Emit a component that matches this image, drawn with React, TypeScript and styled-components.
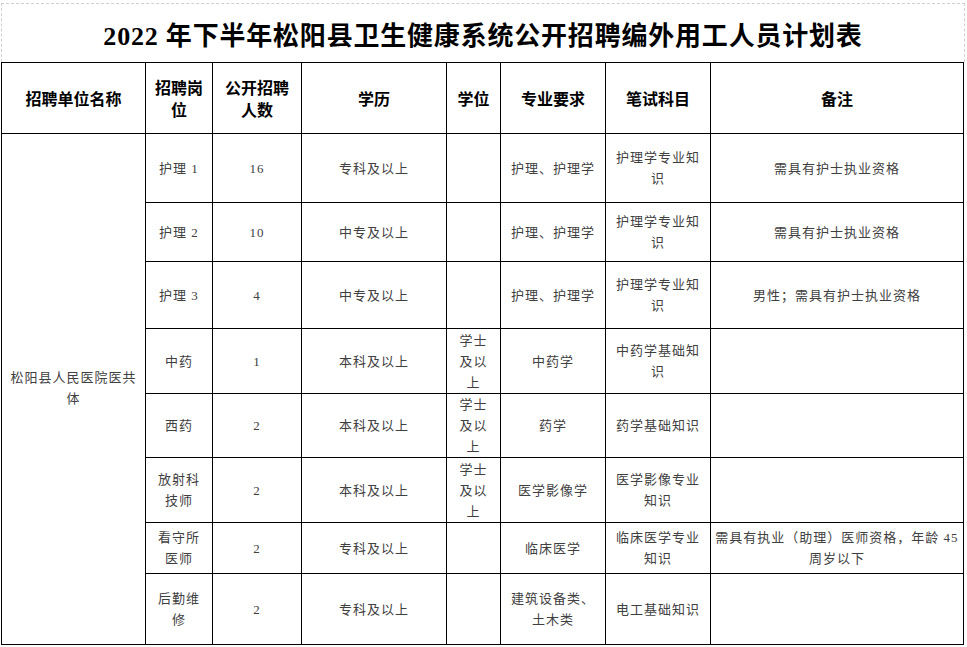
import React from 'react';
import styled, { createGlobalStyle } from 'styled-components';

const GlobalStyle = createGlobalStyle`
  html, body {
    margin: 0;
    padding: 0;
    background: #ffffff;
  }
`;

const SERIF_STACK = '"Liberation Serif", "Noto Sans CJK SC", serif';
const SANS_STACK = '"Noto Sans CJK SC", "Noto Sans", sans-serif';

interface PlanRow {
  post: string;
  count: string;
  education: string;
  degree: string;
  major: string;
  exam: string;
  note: string;
  height: number;
}

const COLUMN_WIDTHS = [144, 67, 89, 145, 54, 105, 105, 253];

const HEADERS = [
  '招聘单位名称',
  '招聘岗\n位',
  '公开招聘\n人数',
  '学历',
  '学位',
  '专业要求',
  '笔试科目',
  '备注'
];

const UNIT_NAME = '松阳县人民医院医共\n体';

const ROWS: PlanRow[] = [
  { post: '护理 1', count: '16', education: '专科及以上', degree: '', major: '护理、护理学', exam: '护理学专业知\n识', note: '需具有护士执业资格', height: 69 },
  { post: '护理 2', count: '10', education: '中专及以上', degree: '', major: '护理、护理学', exam: '护理学专业知\n识', note: '需具有护士执业资格', height: 59 },
  { post: '护理 3', count: '4', education: '中专及以上', degree: '', major: '护理、护理学', exam: '护理学专业知\n识', note: '男性；需具有护士执业资格', height: 67 },
  { post: '中药', count: '1', education: '本科及以上', degree: '学士\n及以\n上', major: '中药学', exam: '中药学基础知\n识', note: '', height: 65 },
  { post: '西药', count: '2', education: '本科及以上', degree: '学士\n及以\n上', major: '药学', exam: '药学基础知识', note: '', height: 64 },
  { post: '放射科\n技师', count: '2', education: '本科及以上', degree: '学士\n及以\n上', major: '医学影像学', exam: '医学影像专业\n知识', note: '', height: 65 },
  { post: '看守所\n医师', count: '2', education: '专科及以上', degree: '', major: '临床医学', exam: '临床医学专业\n知识', note: '需具有执业（助理）医师资格，年龄 45\n周岁以下', height: 51 },
  { post: '后勤维\n修', count: '2', education: '专科及以上', degree: '', major: '建筑设备类、\n土木类', exam: '电工基础知识', note: '', height: 71 }
];

const Page = styled.div`
  width: 967px;
  padding: 3px 0 0 1px;
  box-sizing: border-box;
`;

const TitleBox = styled.div`
  width: 964px;
  height: 59px;
  box-sizing: border-box;
  border: 1px dashed #cfcfcf;
  border-bottom: none;
  display: flex;
  align-items: center;
  justify-content: center;
  padding-top: 1px;
`;

const Title = styled.h1`
  margin: 0;
  font-family: ${SERIF_STACK};
  font-size: 26px;
  font-weight: 700;
  color: #000;
  white-space: nowrap;
  letter-spacing: 0.8px;
`;

const PlanTable = styled.table`
  border-collapse: collapse;
  table-layout: fixed;
  width: 963px;
  border: 1px solid #000;
`;

const Col = styled.col<{ $w: number }>`
  width: ${p => p.$w}px;
`;

const HeadRow = styled.tr`
  height: 71px;
`;

const HeadCell = styled.th`
  border: 1px solid #000;
  padding: 0 4px;
  font-family: ${SANS_STACK};
  font-size: 16px;
  font-weight: 700;
  line-height: 22px;
  color: #000;
  text-align: center;
  vertical-align: middle;
  white-space: pre-line;
`;

const BodyRow = styled.tr<{ $h: number }>`
  height: ${p => p.$h}px;
`;

const Cell = styled.td`
  border: 1px solid #000;
  padding: 0 4px;
  font-family: ${SERIF_STACK};
  font-size: 13px;
  font-weight: 400;
  letter-spacing: 1px;
  line-height: 21px;
  color: #404040;
  text-align: center;
  vertical-align: middle;
  white-space: pre-line;
`;

const UnitCell = styled(Cell)`
  padding-bottom: 2px;
`;

export default function App() {
  return (
    <Page>
      <GlobalStyle />
      <TitleBox>
        <Title>2022 年下半年松阳县卫生健康系统公开招聘编外用工人员计划表</Title>
      </TitleBox>
      <PlanTable>
        <colgroup>
          {COLUMN_WIDTHS.map((w, i) => (
            <Col key={i} $w={w} />
          ))}
        </colgroup>
        <thead>
          <HeadRow>
            {HEADERS.map(h => (
              <HeadCell key={h}>{h}</HeadCell>
            ))}
          </HeadRow>
        </thead>
        <tbody>
          {ROWS.map((row, i) => (
            <BodyRow key={row.post} $h={row.height}>
              {i === 0 && <UnitCell rowSpan={ROWS.length}>{UNIT_NAME}</UnitCell>}
              <Cell>{row.post}</Cell>
              <Cell>{row.count}</Cell>
              <Cell>{row.education}</Cell>
              <Cell>{row.degree}</Cell>
              <Cell>{row.major}</Cell>
              <Cell>{row.exam}</Cell>
              <Cell>{row.note}</Cell>
            </BodyRow>
          ))}
        </tbody>
      </PlanTable>
    </Page>
  );
}
